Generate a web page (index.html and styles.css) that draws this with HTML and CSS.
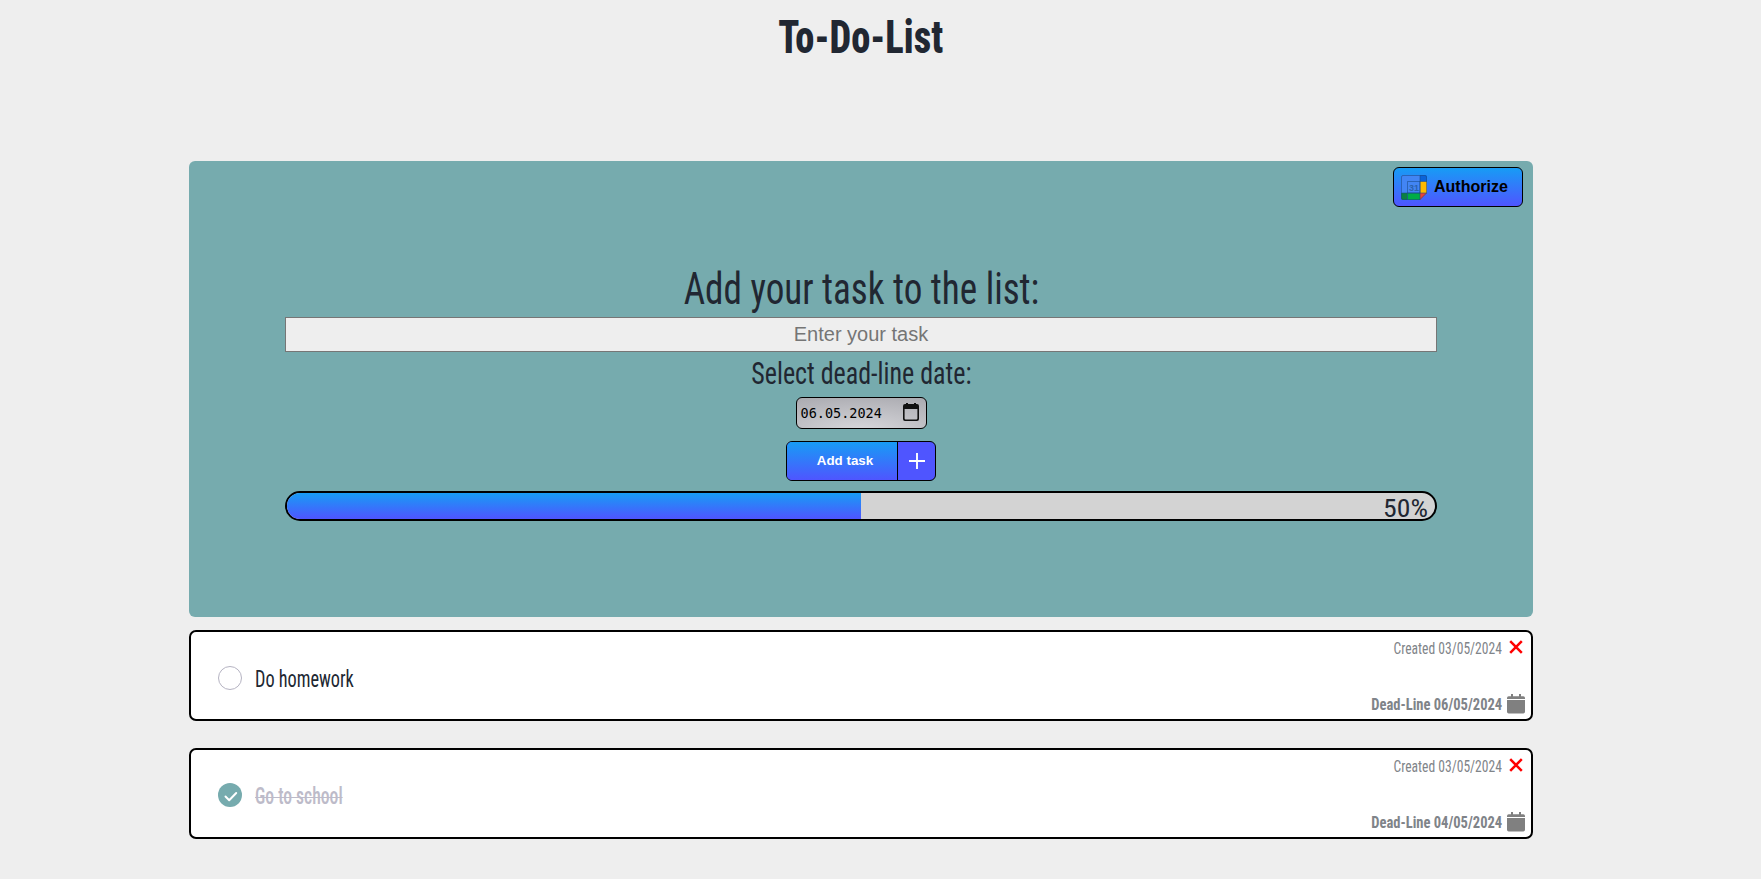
FILE: index.html
```html
<!DOCTYPE html>
<html lang="en">
<head>
<meta charset="utf-8">
<title>To-Do-List</title>
<link rel="stylesheet" href="styles.css">
</head>
<body>
<div class="page">
  <h1 class="title"><span class="narrow title-text">To-Do-List</span></h1>
  <section class="panel">
    <button class="authorize">
      <svg width="26" height="25" viewBox="0 0 26 25">
        <path fill="#4285f4" d="M2 0h17v18H0V2a2 2 0 0 1 2-2z"/>
        <path fill="#0b63d8" d="M19 0h5a2 2 0 0 1 2 2v4.500h-7z"/>
        <path fill="#ffba00" d="M19 6.500h7V18h-7z"/>
        <path fill="#0b8043" d="M0 18h6.500v7H2a2 2 0 0 1-2-2z"/>
        <path fill="#00ac47" d="M6.500 18H19v7H6.500z"/>
        <path fill="#ea4335" d="M19 18h7l-7 7z"/>
        <path fill="none" stroke="#174a86" stroke-opacity=".7" stroke-width=".8" d="M6.500 18V6.500H19V18zM.5 18H26M19 .5V25M19 6.500h7M6.500 18v6.500M.5 23V2Q.5.5 2 .5h22q1.500 0 1.500 1.500v16l-6.500 6.500H2Q.5 24.500.5 23"/>
        <text class="icon-day" x="8" y="15.500">31</text>
      </svg>
      <span>Authorize</span>
    </button>
    <label class="heading"><span class="narrow heading-text">Add your task to the list:</span></label>
    <input class="task-input" placeholder="Enter your task">
    <label class="subheading"><span class="narrow subheading-text">Select dead-line date:</span></label>
    <div class="date">
      <span>06.05.2024</span>
      <svg width="16" height="18" viewBox="0 0 16 18"><path fill="#111" d="M2 1h1V0h2v1h6V0h2v1h1q2 0 2 2v13q0 2-2 2H2q-2 0-2-2V3q0-2 2-2zm-.4 5v9.600q0 .8.800.8h11.200q.8 0 .8-.8V6z"/></svg>
    </div>
    <button class="add">
      <span class="add-label">Add task</span>
      <span class="add-plus"><svg width="16" height="16" viewBox="0 0 16 16"><path stroke="#fff" stroke-width="1.900" d="M8 0v16M0 8h16"/></svg></span>
    </button>
    <div class="progress">
      <div class="bar" style="width:50%"></div>
      <span class="narrow percent">50%</span>
    </div>
  </section>
  <ul class="tasks">
    <li class="task">
      <span class="check"></span>
      <span class="narrow name">Do homework</span>
      <div class="meta">
        <div class="meta-row"><span class="narrow created">Created 03/05/2024</span>
          <svg class="remove" width="18" height="14" viewBox="0 0 18 14"><path stroke="#f00" stroke-width="2.500" d="M3.200 1.200l11.600 11.600M14.800 1.200L3.200 12.800"/></svg></div>
        <div class="meta-row"><span class="narrow deadline">Dead-Line 06/05/2024</span>
          <svg width="18" height="20" viewBox="0 0 18 20"><path fill="#808080" d="M0 5V4q0-1.700 1.700-1.700H4V0h2v2.300h6V0h2v2.300h2.300Q18 2.300 18 4v1zM0 6h18v11.800q0 1.700-1.700 1.700H1.700Q0 19.500 0 17.800z"/></svg></div>
      </div>
    </li>
    <li class="task done">
      <span class="check"><svg width="24" height="24" viewBox="0 0 24 24"><path fill="none" stroke="#fff" stroke-width="2" stroke-linecap="round" stroke-linejoin="round" d="M7.500 13.500l3.700 3.700 7-7.200"/></svg></span>
      <span class="narrow name">Go to school</span>
      <div class="meta">
        <div class="meta-row"><span class="narrow created">Created 03/05/2024</span>
          <svg class="remove" width="18" height="14" viewBox="0 0 18 14"><path stroke="#f00" stroke-width="2.500" d="M3.200 1.200l11.600 11.600M14.800 1.200L3.200 12.800"/></svg></div>
        <div class="meta-row"><span class="narrow deadline">Dead-Line 04/05/2024</span>
          <svg width="18" height="20" viewBox="0 0 18 20"><path fill="#808080" d="M0 5V4q0-1.700 1.700-1.700H4V0h2v2.300h6V0h2v2.300h2.300Q18 2.300 18 4v1zM0 6h18v11.800q0 1.700-1.700 1.700H1.700Q0 19.500 0 17.800z"/></svg></div>
      </div>
    </li>
  </ul>
</div>
</body>
</html>
```
FILE: styles.css
```css
* { box-sizing: border-box; }
body {
  margin: 0;
  height: 879px;
  overflow: hidden;
  background: #eee;
  color: #212732;
  font-family: Roboto, "Liberation Sans", sans-serif;
}
svg { display: block; flex: none; }
.page { width: 1344px; margin-left: 189px; }
.narrow {
  display: inline-block;
  font-stretch: 75%;
  white-space: nowrap;
}
.title {
  margin: 0;
  height: 161px;
  padding-top: 8px;
  text-align: center;
  font-size: 45.6px;
  font-weight: 800;
  line-height: 60px;
}
.title-text { transform: scaleX(.845); }
.panel {
  position: relative;
  height: 456px;
  padding: 100px 96px 0;
  border-radius: 6px;
  background: #76abae;
  display: flex;
  flex-direction: column;
  align-items: center;
}
.authorize {
  position: absolute;
  top: 6px;
  right: 10px;
  width: 130px;
  height: 40px;
  padding: 0 0 0 7px;
  display: flex;
  align-items: center;
  gap: 7px;
  border: 1px solid #000;
  border-radius: 6px;
  background: linear-gradient(#179cf5, #4f55ff);
  color: #000;
  font: bold 16px "Liberation Sans", Arial, sans-serif;
}
.icon-day { font: bold 9px "Liberation Sans", Arial, sans-serif; fill: #2a62ad; }
.heading { height: 56px; line-height: 56px; font-size: 45px; }
.heading-text { transform: scaleX(.825); }
.task-input {
  width: 100%;
  height: 35px;
  padding: 0;
  border: 1px solid #767676;
  border-radius: 0;
  background: #eee;
  text-align: center;
  font: 20px "Liberation Sans", Arial, sans-serif;
}
.task-input::placeholder { color: #757575; }
.subheading { height: 45px; line-height: 44px; font-size: 31px; }
.subheading-text { transform: scaleX(.838); }
.date {
  width: 131px;
  height: 32px;
  padding: 0 7px 0 4px;
  display: flex;
  align-items: center;
  justify-content: space-between;
  border: 1px solid #000;
  border-radius: 6px;
  background: radial-gradient(ellipse 100% 130% at 50% 110%, #d8d8dc, #a9a9af);
  color: #000;
  font: 13.500px "DejaVu Sans Mono", monospace;
}
.date svg { margin-bottom: 2px; }
.add {
  width: 150px;
  height: 40px;
  margin-top: 12px;
  padding: 0;
  display: flex;
  overflow: hidden;
  border: 1px solid #000;
  border-radius: 6px;
  background: #4f55ff;
  color: #fff;
  font: bold 13.333px "Liberation Sans", Arial, sans-serif;
}
.add-label {
  width: 111px;
  height: 38px;
  padding-left: 6px;
  line-height: 38px;
  border-right: 1px solid #000;
  background: linear-gradient(#179cf5, #4f55ff);
}
.add-plus { flex: 1; height: 38px; display: grid; place-items: center; }
.progress {
  width: 100%;
  height: 30px;
  margin-top: 10px;
  display: flex;
  justify-content: space-between;
  overflow: hidden;
  border: 2px solid #000;
  border-radius: 15px;
  background: #d3d3d3;
}
.bar { background: linear-gradient(to bottom, #179cf5, #4f55ff); }
.percent {
  margin-right: 7px;
  font-size: 26.5px;
  line-height: 30px;
  transform: scaleX(1.045);
  transform-origin: right;
}
.tasks { list-style: none; margin: 13px 0 0; padding: 0; display: grid; gap: 27px; }
.task {
  height: 91px;
  padding: 0 6px 0 27px;
  display: flex;
  align-items: center;
  border: 2px solid #000;
  border-radius: 7px;
  background: #fff;
}
.check {
  width: 24px;
  height: 24px;
  margin: 5px 12.5px 0 0;
  border: 1px solid #b5b3c2;
  border-radius: 50%;
}
.name {
  margin-top: 7px;
  font-size: 23px;
  transform: scaleX(.793);
  transform-origin: left;
}
.done .check { margin-top: 3px; border: 0; background: #76abae; }
.done .name {
  margin-top: 5px;
  color: #bdbbc9;
  font-weight: 500;
  text-decoration: line-through;
  text-decoration-thickness: 1px;
  transform: scaleX(.765);
}
.meta {
  margin-left: auto;
  height: 100%;
  padding: 7px 0 5px;
  display: flex;
  flex-direction: column;
  justify-content: space-between;
  align-items: flex-end;
  color: #808489;
  font-size: 16px;
}
.meta-row { display: flex; align-items: center; gap: 5px; height: 20px; }
.remove { margin-bottom: 4px; }
.created { margin-bottom: 2px; transform: scaleX(.847); transform-origin: right; }
.deadline { font-weight: 700; transform: scaleX(.908); transform-origin: right; }
```
